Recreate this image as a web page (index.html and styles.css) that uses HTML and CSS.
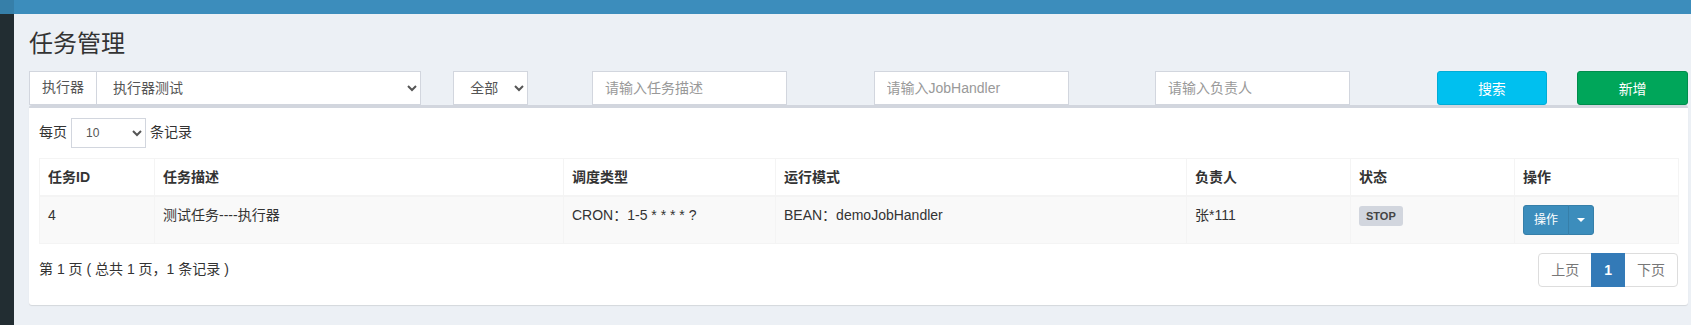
FILE: index.html
```html
<!DOCTYPE html>
<html lang="zh-CN">
<head>
  <meta charset="UTF-8" />
  <title>任务管理</title>
  <link rel="stylesheet" href="styles.css">
</head>
<body>

  <header class="topbar"><span class="logo"></span></header>

  <div class="wrapper">
    <aside class="sidebar"></aside>

    <main class="content">
      <h1 class="page-title">任务管理</h1>

      <div class="filters">
        <div class="input-group span-3">
          <span class="addon">执行器</span>
          <select class="form-control">
            <option>执行器测试</option>
          </select>
        </div>
        <div class="span-1">
          <select class="form-control status-select">
            <option>全部</option>
          </select>
        </div>
        <div class="span-2"><input type="text" class="form-control text-input" placeholder="请输入任务描述" /></div>
        <div class="span-2"><input type="text" class="form-control text-input" placeholder="请输入JobHandler" /></div>
        <div class="span-2"><input type="text" class="form-control text-input" placeholder="请输入负责人" /></div>
        <div class="span-1"><button class="btn btn-info">搜索</button></div>
        <div class="span-1"><button class="btn btn-success">新增</button></div>
      </div>

      <div class="box">
        <div class="box-body">
          <div class="length-row">
            <span>每页</span>
            <select class="form-control length-select">
              <option>10</option>
            </select>
            <span>条记录</span>
          </div>

          <table class="job-table">
            <colgroup>
              <col style="width: 115px">
              <col style="width: 409px">
              <col style="width: 212px">
              <col style="width: 411px">
              <col style="width: 164px">
              <col style="width: 164px">
              <col style="width: 164px">
            </colgroup>
            <thead>
              <tr>
                <th>任务ID</th>
                <th>任务描述</th>
                <th>调度类型</th>
                <th>运行模式</th>
                <th>负责人</th>
                <th>状态</th>
                <th>操作</th>
              </tr>
            </thead>
            <tbody>
              <tr>
                <td>4</td>
                <td>测试任务----执行器</td>
                <td>CRON：1-5 * * * * ?</td>
                <td>BEAN：demoJobHandler</td>
                <td>张*111</td>
                <td><span class="label">STOP</span></td>
                <td>
                  <div class="btn-group">
                    <button class="btn-sm">操作</button>
                    <button class="btn-sm btn-caret"><span class="caret"></span></button>
                  </div>
                </td>
              </tr>
            </tbody>
          </table>

          <div class="table-footer">
            <div class="info">第 1 页 ( 总共 1 页，1 条记录 )</div>
            <ul class="pagination">
              <li class="disabled">上页</li>
              <li class="active">1</li>
              <li class="disabled">下页</li>
            </ul>
          </div>
        </div>
      </div>
    </main>
  </div>

</body>
</html>
```

FILE: styles.css
```css
body {
  margin: 0;
  font-family: "Liberation Sans", "Noto Sans CJK SC", sans-serif;
  font-size: 14px;
  line-height: 1.42857;
  color: #333;
  background: #ecf0f5;
  overflow: hidden;
}
.topbar {
  height: 14px;
  background: #3c8dbc;
  display: flex;
}
.logo {
  width: 14px;
  background: #367fa9;
}
.wrapper {
  display: flex;
  min-height: 311px;
}
.sidebar {
  width: 14px;
  flex-shrink: 0;
  background: #222d32;
}
.content {
  flex: 1;
  padding: 15px 3px 15px 15px;
  min-width: 0;
}
.page-title {
  margin: 0;
  font-size: 24px;
  line-height: 30px;
  font-weight: 400;
  color: #333;
}

/* filter row */
.filters {
  display: grid;
  grid-template-columns: repeat(12, 1fr);
  column-gap: 30px;
  margin-top: 12px;
}
.span-1 { grid-column: span 1; }
.span-2 { grid-column: span 2; }
.span-3 { grid-column: span 3; }

.form-control {
  height: 34px;
  padding: 6px 12px;
  font-family: inherit;
  font-size: 14px;
  color: #555;
  background: #fff;
  border: 1px solid #d2d6de;
  border-radius: 0;
  box-sizing: border-box;
  outline: none;
}
.form-control::placeholder {
  color: #999;
}
.input-group {
  display: flex;
}
.addon {
  width: 67px;
  box-sizing: border-box;
  height: 34px;
  padding: 6px 12px;
  border: 1px solid #d2d6de;
  border-right: 0;
  background: #fff;
  color: #555;
  text-align: center;
}
.input-group select {
  flex: 1;
}
.status-select {
  width: 75px;
  margin-left: 2px;
}
.text-input {
  width: 195px;
}
.btn {
  width: 100%;
  height: 34px;
  border-radius: 3px;
  border: 1px solid transparent;
  color: #fff;
  font-family: inherit;
  font-size: 14px;
  cursor: pointer;
}
.btn-info {
  background: #00c0ef;
  border-color: #00acd6;
}
.btn-success {
  background: #00a65a;
  border-color: #008d4c;
}

/* box */
.box {
  background: #fff;
  border-top: 3px solid #d2d6de;
  border-radius: 3px;
  box-shadow: 0 1px 1px rgba(0, 0, 0, 0.1);
}
.box-body {
  padding: 10px;
}
.length-row {
  display: flex;
  align-items: center;
  gap: 4px;
  height: 30px;
}
.length-select {
  width: 75px;
  height: 30px;
  padding: 5px 10px;
  font-size: 12px;
}

.job-table {
  width: 100%;
  table-layout: fixed;
  border-collapse: collapse;
  margin-top: 10px;
  border: 1px solid #f4f4f4;
}
.job-table th,
.job-table td {
  padding: 8px;
  text-align: left;
  vertical-align: top;
  border: 1px solid #f4f4f4;
  line-height: 20px;
}
.job-table th {
  font-weight: 700;
  border-bottom-width: 2px;
}
.job-table tbody tr {
  background: #f9f9f9;
}
.label {
  display: inline-block;
  padding: 4px 7px;
  font-size: 11px;
  font-weight: 700;
  line-height: 12px;
  color: #444;
  background: #d2d6de;
  border-radius: 3px;
  vertical-align: middle;
}
.btn-group {
  display: inline-flex;
}
.btn-sm {
  height: 30px;
  padding: 5px 10px;
  font-family: inherit;
  font-size: 12px;
  line-height: 18px;
  color: #fff;
  background: #3c8dbc;
  border: 1px solid #367fa9;
  border-radius: 3px 0 0 3px;
}
.btn-caret {
  padding: 5px 8px;
  margin-left: -1px;
  border-radius: 0 3px 3px 0;
  display: flex;
  align-items: center;
}
.caret {
  width: 0;
  height: 0;
  border-top: 4px solid #fff;
  border-left: 4px solid transparent;
  border-right: 4px solid transparent;
}

.table-footer {
  display: flex;
  justify-content: space-between;
  align-items: center;
  margin: 9px 0 8px;
}
.pagination {
  display: flex;
  margin: 0;
  padding: 0;
  list-style: none;
}
.pagination li {
  padding: 6px 12px;
  line-height: 20px;
  border: 1px solid #ddd;
  margin-left: -1px;
  color: #777;
  background: #fff;
}
.pagination li:first-child {
  border-radius: 4px 0 0 4px;
}
.pagination li:last-child {
  border-radius: 0 4px 4px 0;
}
.pagination .active {
  color: #fff;
  background: #337ab7;
  border-color: #337ab7;
  font-weight: 700;
  position: relative;
}
```
